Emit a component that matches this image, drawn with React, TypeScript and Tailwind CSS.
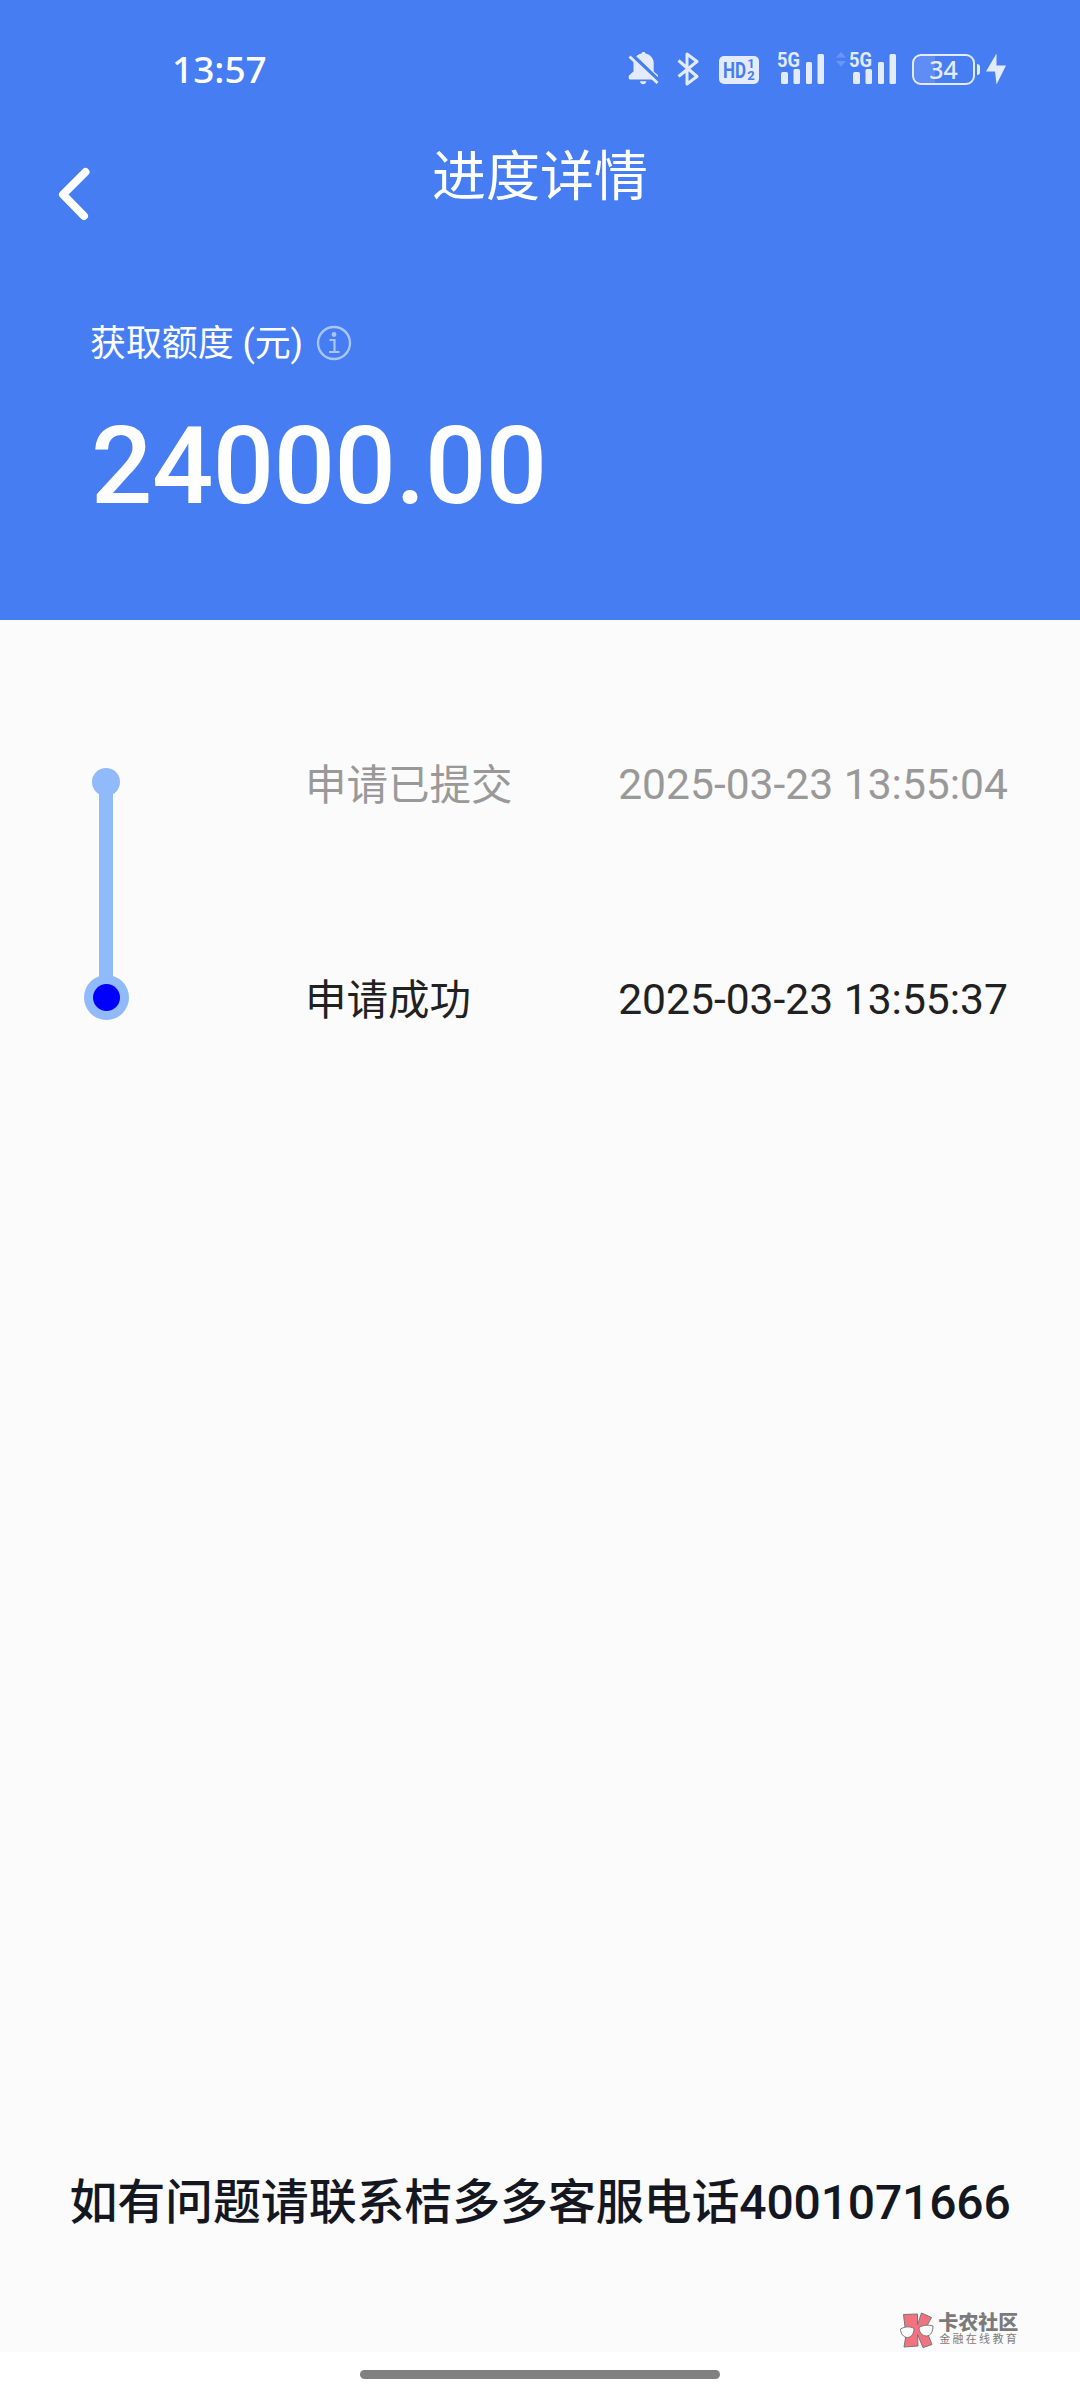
import type { ReactNode } from "react";

type Step = {
  label: string;
  time: string;
  current: boolean;
};

const steps: Step[] = [
  { label: "申请已提交", time: "2025-03-23 13:55:04", current: false },
  { label: "申请成功", time: "2025-03-23 13:55:37", current: true },
];

function Icon({ width, height, children }: { width: number; height: number; children: ReactNode }) {
  return (
    <svg
      width={width}
      height={height}
      viewBox={`0 0 ${width} ${height}`}
      fill="none"
      className="shrink-0 overflow-visible"
    >
      {children}
    </svg>
  );
}

function BellOff() {
  return (
    <Icon width={32} height={36}>
      <path
        d="M13.5 2.400C13.800 1.400 14.600 1 15.500 1s1.700.4 2 1.400c4.900 1 8.200 4.800 8.200 9.600v8.500l3.800 3.200c.8.800.8 4.800-.6 4.800H2.200C.6 28.500.2 25.500 1.200 24.200L5.500 20.500V12c0-4.800 3.100-8.600 8-9.600ZM12 30.200h6.400c-.4 2.200-1.700 3-3.200 3s-2.800-.8-3.200-3Z"
        fill="#e3ebfd"
      />
      <path d="M4.500 4.500 32 31" stroke="#477df2" strokeWidth="4" />
      <path d="m1.500 5.500 28 26.500" stroke="#e3ebfd" strokeWidth="3" />
    </Icon>
  );
}

function Bluetooth() {
  return (
    <Icon width={22} height={36}>
      <path
        d="m1.500 9.500 18.500 16-10 7.500V3L20 10.500l-18.500 15"
        stroke="#e3ebfd"
        strokeWidth="3"
        strokeLinejoin="round"
      />
    </Icon>
  );
}

function HdVoice() {
  return (
    <div className="mt-[5px] flex h-7 w-10 items-center justify-center gap-px rounded-[5px] bg-[#e3ebfd]">
      <Icon width={23} height={28}>
        <text y="22" fontSize="21.500" fontWeight="700" fill="#477df2" textLength="23" lengthAdjust="spacingAndGlyphs">
          HD
        </text>
      </Icon>
      <div className="flex flex-col text-[13px] leading-[12px] font-bold text-[#477df2]">
        <span>1</span>
        <span>2</span>
      </div>
    </div>
  );
}

function Signal() {
  return (
    <Icon width={46} height={36}>
      <g fill="#e3ebfd">
        <rect x="3" y="21" width="7" height="12" rx="1.500" />
        <rect x="15.500" y="18" width="6.500" height="15" rx="1.500" />
        <rect x="28" y="11" width="6" height="22" rx="1.500" />
        <rect x="39.500" y="3" width="6.500" height="30" rx="1.500" />
        <text x="-1" y="16" fontSize="21" fontWeight="700" textLength="23" lengthAdjust="spacingAndGlyphs">
          5G
        </text>
      </g>
    </Icon>
  );
}

function StatusBar() {
  return (
    <div className="flex h-[138px] items-start pt-[51px] pl-[172px] text-[#e3ebfd]">
      <span className="w-[456px] font-['Noto_Sans'] text-[37px] leading-9 font-medium text-white">13:57</span>
      <BellOff />
      <div className="ml-[17px]">
        <Bluetooth />
      </div>
      <div className="ml-5">
        <HdVoice />
      </div>
      <div className="ml-[19px]">
        <Signal />
      </div>
      <div className="ml-[12px]">
        <Icon width={10} height={20}>
          <path d="m5 1 5 5.500H0ZM5 15.500l5-5.500H0Z" fill="#6a96f7" />
        </Icon>
      </div>
      <div className="ml-[4px]">
        <Signal />
      </div>
      <div className="mt-[3px] ml-4 flex h-[31px] w-[63px] items-center justify-center rounded-[9px] border-2 border-[#e3ebfd] bg-linear-to-r from-[#5d8df5] from-35% to-transparent to-35% font-['Noto_Sans'] text-[25px] font-medium">
        34
      </div>
      <div className="mt-[13px] ml-0.5 h-[11px] w-[3px] rounded-r bg-[#e3ebfd]" />
      <div className="ml-[6px]">
        <Icon width={20} height={36}>
          <path d="M10.500 2.500 0 20.500h9L10.500 33.500l9.500-19h-9.500Z" fill="#e3ebfd" />
        </Icon>
      </div>
    </div>
  );
}

function Header() {
  return (
    <header className="h-[620px] bg-[#477df2] text-white">
      <StatusBar />
      <div className="grid h-[162px] grid-cols-[1fr_auto_1fr] items-start">
        <div className="pt-[29px] pl-[57px]">
          <Icon width={36} height={54}>
            <path d="M28.500 5 6 27.500 27 49" stroke="white" strokeWidth="8" strokeLinecap="round" strokeLinejoin="round" />
          </Icon>
        </div>
        <h1 className="pt-[6px] text-[54px] leading-[68px]">进度详情</h1>
      </div>
      <div className="flex items-center pt-[18px] pl-[90px]">
        <span className="pt-px text-[36px] leading-[50px] tracking-[-0.1px]">获取额度 (元)</span>
        <div className="mb-0.5 ml-[13px]">
          <Icon width={36} height={36}>
            <circle cx="18" cy="18" r="16" stroke="#a8c6fc" strokeWidth="2.400" />
            <circle cx="18" cy="9.500" r="2.400" fill="#a8c6fc" />
            <path d="M13.500 15h5v12M13 27h10.500" stroke="#a8c6fc" strokeWidth="2.200" />
          </Icon>
        </div>
      </div>
      <div className="pt-[32px] pl-[91px] text-[108px] leading-[130px] font-medium tracking-[-0.5px]">24000.00</div>
    </header>
  );
}

function Progress() {
  return (
    <section className="flex pt-[143px] pr-[72px] pl-[84px]">
      <div className="flex w-[45px] shrink-0 flex-col items-center pt-[5px]">
        <div className="mr-px size-7 rounded-full bg-[#90bafa]" />
        <div className="-my-1 mr-px h-[191px] w-[14px] bg-[#90bafa]" />
        <div className="-mt-1 flex size-[45px] items-center justify-center rounded-full bg-[#90bafa]">
          <div className="size-[27px] rounded-full bg-[#0000fb]" />
        </div>
      </div>
      <ul className="ml-[176px] flex-1">
        {steps.map((s) => (
          <li
            key={s.time}
            className={`flex h-[215px] items-start justify-between leading-[44px] ${
              s.current ? "text-[#212121]" : "text-[#999999]"
            }`}
          >
            <span className="pt-px text-[41.500px]">{s.label}</span>
            <span className="-mt-px text-[42.600px]">{s.time}</span>
          </li>
        ))}
      </ul>
    </section>
  );
}

function Watermark() {
  return (
    <div className="mb-0.5 flex h-10 items-center gap-[3px] self-end pr-[61px] text-[#7b7b7b]">
      <Icon width={36} height={40}>
        <g stroke="#777" strokeWidth="1">
          <path d="M4.500 4.500 18.500 4v11l4-12 10 4.500-6 11 6.500 16-9 3-5.500-13 .5 11.500-14 1 2-12Z" fill="#f2737f" />
          <path d="M1.500 19c4-2.500 10-3 13.500-.5 0 5-2.500 9-6.500 9s-7-4-7-8.500ZM20 17.500c4-2.500 9-3 14-1.500 0 5-2 10-6.500 10S20 22 20 17.500Z" fill="#fbfbfb" />
        </g>
      </Icon>
      <div className="flex flex-col">
        <span className="text-[20px] leading-[20px] font-black">卡农社区</span>
        <span className="pl-px text-[11px] leading-[14px] tracking-[2.300px]">金融在线教育</span>
      </div>
    </div>
  );
}

export default function App() {
  return (
    <div className="flex h-[2400px] w-[1080px] flex-col overflow-hidden bg-[#fbfbfb] font-[Roboto,'Noto_Sans_CJK_SC',sans-serif]">
      <Header />
      <Progress />
      <p className="mt-auto pb-[77px] text-center text-[48px] leading-[60px] font-medium tracking-[-0.15px] text-[#14171f]">
        如有问题请联系桔多多客服电话4001071666
      </p>
      <Watermark />
      <div className="flex h-12 shrink-0 items-start justify-center bg-white pt-[18px]">
        <div className="h-[9px] w-[360px] rounded-full bg-[#808080]" />
      </div>
    </div>
  );
}
